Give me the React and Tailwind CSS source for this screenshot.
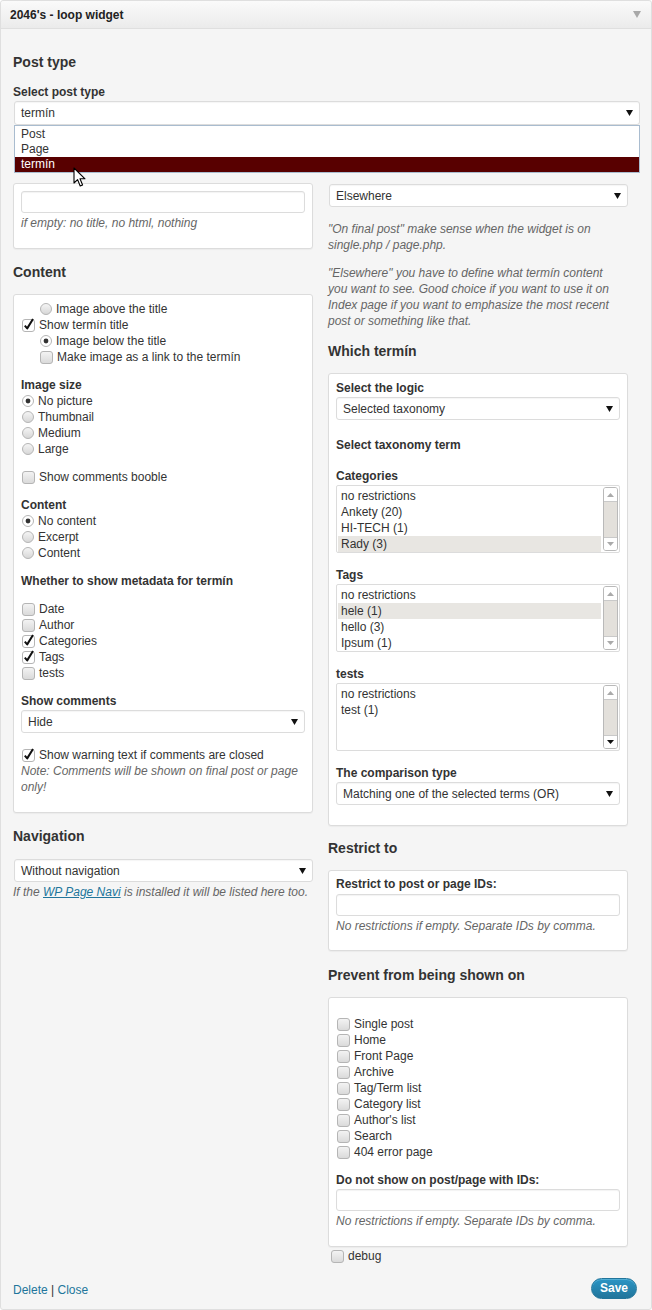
import React from 'react';

const Check = ({ checked }) => (
  <svg width="13" height="13" viewBox="0 0 13 13" className="shrink-0 overflow-visible">
    <defs>
      <linearGradient id="cbg" x1="0" y1="0" x2="0" y2="1">
        <stop offset="0" stopColor="#f4f4f4" />
        <stop offset="1" stopColor="#d9d9d9" />
      </linearGradient>
    </defs>
    <rect x="0.5" y="0.5" width="12" height="12" rx="2.5" fill={checked ? '#fff' : 'url(#cbg)'} stroke="#b5b5b5" />
    {checked && (
      <path d="M2.8 6.6 L5.2 9.4 L11 0" fill="none" stroke="#111" strokeWidth="2" strokeLinejoin="round" />
    )}
  </svg>
);

const Radio = ({ checked }) => (
  <svg width="12" height="12" viewBox="0 0 12 12" className="shrink-0">
    <defs>
      <linearGradient id="rbg" x1="0" y1="0" x2="0" y2="1">
        <stop offset="0" stopColor="#f6f6f6" />
        <stop offset="1" stopColor="#d6d6d6" />
      </linearGradient>
    </defs>
    <circle cx="6" cy="6" r="5.5" fill={checked ? '#fff' : 'url(#rbg)'} stroke="#b5b5b5" />
    {checked && <circle cx="6" cy="6" r="2.4" fill="#333" />}
  </svg>
);

const Row = ({ type = 'check', checked, indent, className = '', children }) => (
  <div className={`flex items-center h-[16px] gap-[4px] ${indent ? 'pl-[18px]' : ''} ${className}`}>
    <span className="ml-px flex">{type === 'radio' ? <Radio checked={checked} /> : <Check checked={checked} />}</span>
    <span>{children}</span>
  </div>
);

const Arrow = () => (
  <svg width="7" height="6" viewBox="0 0 7 6" className="shrink-0">
    <polygon points="0,0 7,0 3.5,6" fill="#111" />
  </svg>
);

const Select = ({ value, className = '' }) => (
  <div className={`flex items-center justify-between h-[23px] bg-white border border-[#dcdcdc] rounded-[3px] pl-[6px] pr-[6px] shadow-[inset_0_1px_1px_rgba(0,0,0,0.04)] ${className}`}>
    <span>{value}</span>
    <Arrow />
  </div>
);

const Input = ({ className = '' }) => (
  <div className={`h-[22px] bg-white border border-[#dcdcdc] rounded-[3px] shadow-[inset_0_1px_1px_rgba(0,0,0,0.05)] ${className}`} />
);

const Label = ({ className = '', children }) => <div className={`font-bold ${className}`}>{children}</div>;

const Note = ({ className = '', children }) => <p className={`italic text-[#666] ${className}`}>{children}</p>;

const Heading = ({ className = '', children }) => (
  <h3 className={`text-[14px] leading-[16px] font-bold text-[#333] ${className}`}>{children}</h3>
);

const Box = ({ className = '', children }) => (
  <div className={`bg-white border border-[#dcdcdc] rounded-[3px] shadow-[0_1px_1px_rgba(0,0,0,0.04)] px-[7px] ${className}`}>
    {children}
  </div>
);

const ScrollArrow = ({ up, active }) => (
  <svg width="7" height="4" viewBox="0 0 7 4">
    <polygon points={up ? '0,4 7,4 3.5,0' : '0,0 7,0 3.5,4'} fill={active ? '#111' : '#aaa'} />
  </svg>
);

const ListBox = ({ items, selected, downActive }) => (
  <div className="mt-px h-[68px] bg-white border border-[#dcdcdc] rounded-[2px] flex pl-px pt-[2px] pr-px pb-px">
    <div className="flex-1">
      {items.map((it) => (
        <div key={it} className={`h-[16px] pl-[3px] ${it === selected ? 'bg-[#e8e6e2]' : ''}`}>
          {it}
        </div>
      ))}
    </div>
    <div className="w-[15px] -mt-px ml-[2px] flex flex-col border border-[#b9b9b9] rounded-[3px] overflow-hidden">
      <div className="h-[14px] bg-white border-b border-[#c9c9c9] flex items-center justify-center">
        <ScrollArrow up />
      </div>
      <div className="flex-1 bg-[#e3e0db]" />
      <div className="h-[13px] bg-white border-t border-[#c9c9c9] flex items-center justify-center">
        <ScrollArrow active={downActive} />
      </div>
    </div>
  </div>
);

const Cursor = () => (
  <svg width="14" height="21" viewBox="0 0 14 21" className="absolute left-[59px] top-[66px] z-20">
    <path d="M1 1 L1 16 L4.6 12.6 L7.2 19 L9.6 18 L7 11.8 L12 11.8 Z" fill="#fff" stroke="#000" strokeWidth="1.1" strokeLinejoin="round" />
  </svg>
);

const App = () => {
  return (
    <div className="w-[652px] h-[1310px] font-['Liberation_Sans',Arial,sans-serif] text-[12px] leading-[16px] text-[#333]">
      <div className="h-full flex flex-col bg-[#f5f5f5] border border-[#dfdfdf] rounded-[3px]">
        {/* Header */}
        <div className="h-[28px] shrink-0 flex items-center justify-between pl-[9px] pr-[10px] bg-gradient-to-b from-[#fafafa] to-[#ebebeb] border-b border-[#dfdfdf] rounded-t-[3px]">
          <span className="font-bold text-[#222]">2046's - loop widget</span>
          <svg width="8" height="7" viewBox="0 0 8 7">
            <polygon points="0,0 8,0 4,7" fill="#a8a8a8" />
          </svg>
        </div>

        <div className="flex-1 flex flex-col pl-[12px] pr-[11px] pt-[25px]">
          <Heading>Post type</Heading>
          <Label className="mt-[14px]">Select post type</Label>
          <div className="relative mt-px ml-px w-[626px]">
            <Select value="termín" className="h-[24px] border-[#c3c7cc]" />
            <div className="absolute left-0 right-0 top-full h-[48px] pt-px bg-white border border-[#a9bccf] z-10">
              <div className="h-[15px] leading-[15px] pl-[6px]">Post</div>
              <div className="h-[15px] leading-[15px] pl-[6px]">Page</div>
              <div className="h-[15px] leading-[15px] pl-[6px] bg-[#580000] text-white">termín</div>
            </div>
            <Cursor />
          </div>

          <div className="mt-[58px] grid grid-cols-[300px_300px] gap-x-[15px] items-start">
            {/* Left column */}
            <div className="flex flex-col">
              <Box className="pt-[7px] pb-[17px]">
                <Input />
                <Note className="mt-[2px]">if empty: no title, no html, nothing</Note>
              </Box>

              <Heading className="mt-[15px]">Content</Heading>
              <Box className="mt-[14px] pt-[6px] pb-[17px]">
                <Row type="radio" indent>Image above the title</Row>
                <Row checked>Show termín title</Row>
                <Row type="radio" indent checked>Image below the title</Row>
                <Row indent>Make image as a link to the termín</Row>

                <Label className="mt-[12px]">Image size</Label>
                <Row type="radio" checked>No picture</Row>
                <Row type="radio">Thumbnail</Row>
                <Row type="radio">Medium</Row>
                <Row type="radio">Large</Row>

                <Row className="mt-[12px]">Show comments booble</Row>

                <Label className="mt-[12px]">Content</Label>
                <Row type="radio" checked>No content</Row>
                <Row type="radio">Excerpt</Row>
                <Row type="radio">Content</Row>

                <Label className="mt-[12px]">Whether to show metadata for termín</Label>
                <Row className="mt-[12px]">Date</Row>
                <Row>Author</Row>
                <Row checked>Categories</Row>
                <Row checked>Tags</Row>
                <Row>tests</Row>

                <Label className="mt-[12px]">Show comments</Label>
                <Select value="Hide" className="mt-px" />

                <Row checked className="mt-[14px]">Show warning text if comments are closed</Row>
                <Note>Note: Comments will be shown on final post or page only!</Note>
              </Box>

              <Heading className="mt-[15px]">Navigation</Heading>
              <Select value="Without navigation" className="mt-[15px] ml-px" />
              <Note className="mt-[2px]">
                If the <a href="#" className="text-[#21759b] underline">WP Page Navi</a> is installed it will be listed here too.
              </Note>
            </div>

            {/* Right column */}
            <div className="flex flex-col">
              <Select value="Elsewhere" className="mt-px ml-px" />
              <Note className="mt-[14px]">
                "On final post" make sense when the widget is on
                <br />
                single.php / page.php.
              </Note>
              <Note className="mt-[12px]">
                "Elsewhere" you have to define what termín content
                <br />
                you want to see. Good choice if you want to use it on
                <br />
                Index page if you want to emphasize the most recent
                <br />
                post or something like that.
              </Note>

              <Heading className="mt-[14px]">Which termín</Heading>
              <Box className="mt-[14px] pt-[6px] pb-[20px]">
                <Label>Select the logic</Label>
                <Select value="Selected taxonomy" className="mt-px" />
                <Label className="mt-[17px]">Select taxonomy term</Label>
                <Label className="mt-[15px]">Categories</Label>
                <ListBox items={['no restrictions', 'Ankety (20)', 'HI-TECH (1)', 'Rady (3)']} selected="Rady (3)" />
                <Label className="mt-[14px]">Tags</Label>
                <ListBox items={['no restrictions', 'hele (1)', 'hello (3)', 'Ipsum (1)']} selected="hele (1)" />
                <Label className="mt-[14px]">tests</Label>
                <ListBox items={['no restrictions', 'test (1)']} downActive />
                <Label className="mt-[14px]">The comparison type</Label>
                <Select value="Matching one of the selected terms (OR)" className="mt-px" />
              </Box>

              <Heading className="mt-[14px]">Restrict to</Heading>
              <Box className="mt-[14px] pt-[5px] pb-[16px]">
                <Label>Restrict to post or page IDs:</Label>
                <Input className="mt-[2px]" />
                <Note className="mt-[2px]">No restrictions if empty. Separate IDs by comma.</Note>
              </Box>

              <Heading className="mt-[16px]">Prevent from being shown on</Heading>
              <Box className="mt-[14px] pt-[18px] pb-[17px]">
                {['Single post', 'Home', 'Front Page', 'Archive', 'Tag/Term list', 'Category list', "Author's list", 'Search', '404 error page'].map((t) => (
                  <Row key={t}>{t}</Row>
                ))}
                <Label className="mt-[12px]">Do not show on post/page with IDs:</Label>
                <Input className="mt-px" />
                <Note className="mt-[2px]">No restrictions if empty. Separate IDs by comma.</Note>
              </Box>
              <Row className="ml-[2px] mt-px">debug</Row>
            </div>
          </div>

          {/* Footer */}
          <div className="mt-[14px] flex items-center justify-between">
            <div className="pt-[3px]">
              <a href="#" className="text-[#21759b]">Delete</a>
              <span className="text-[#333]"> | </span>
              <a href="#" className="text-[#21759b]">Close</a>
            </div>
            <button className="mr-[3px] h-[21px] w-[46px] rounded-full bg-gradient-to-b from-[#2a95c5] to-[#21759b] border border-[#21759b] text-white font-bold text-[12px] leading-[19px] shadow-[inset_0_1px_0_rgba(120,200,230,0.5)]">
              Save
            </button>
          </div>
        </div>
      </div>
    </div>
  );
};

export default App;
